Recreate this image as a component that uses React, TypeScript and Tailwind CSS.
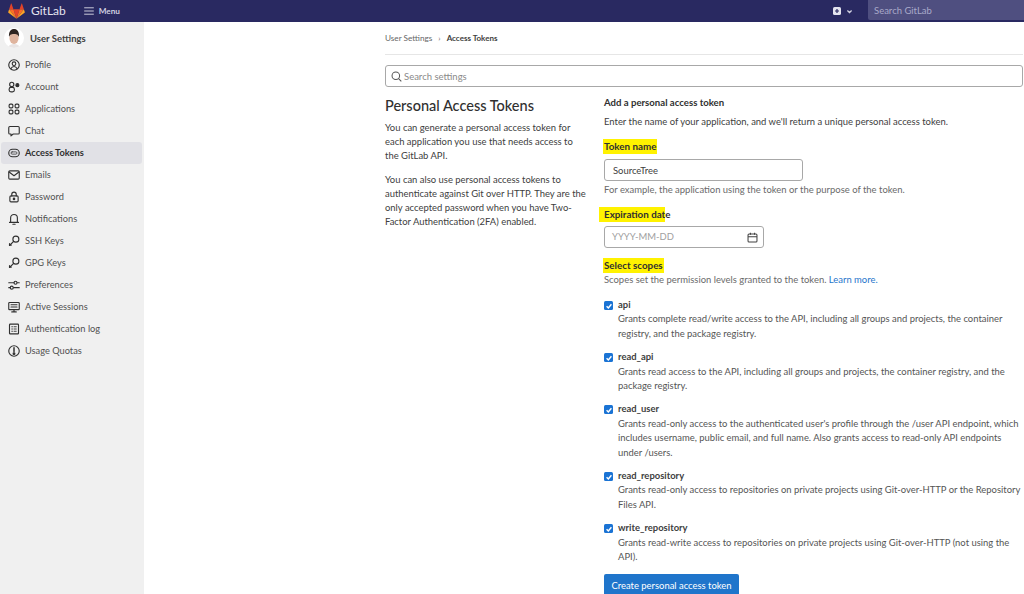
import type { ReactNode } from "react";

const FONT = "font-['Lato','Noto_Sans',sans-serif]";

function Ico({ children }: { children: ReactNode }) {
  return (
    <svg viewBox="0 0 16 16" className="w-[12px] h-[12px] shrink-0" fill="none" stroke="#303030" strokeWidth="1.5" strokeLinecap="round" strokeLinejoin="round">
      {children}
    </svg>
  );
}

const key = (
  <>
    <circle cx="10.5" cy="5.5" r="4" />
    <path d="M7.5 8.5L2 14v-2.500M4 12v2" />
  </>
);

const NAV: { label: string; icon: ReactNode; active?: boolean }[] = [
  { label: "Profile", icon: <><circle cx="8" cy="8" r="7" /><circle cx="8" cy="6.2" r="2.4" /><path d="M3.8 13c1-2.2 2.4-3 4.2-3s3.2.8 4.2 3" /></> },
  { label: "Account", icon: <><circle cx="5" cy="4.5" r="2.8" /><rect x="1.5" y="8.5" width="7" height="6" rx="2.5" /><circle cx="12.5" cy="5.5" r="2" fill="#303030" /></> },
  { label: "Applications", icon: <><rect x="1.5" y="1.5" width="5" height="5" rx="1.5" /><rect x="9.5" y="1.5" width="5" height="5" rx="1.5" /><rect x="1.5" y="9.5" width="5" height="5" rx="1.5" /><rect x="9.5" y="9.5" width="5" height="5" rx="1.5" /></> },
  { label: "Chat", icon: <path d="M2.5 2h11A1.500 1.500 0 0 1 15 3.500v7a1.500 1.500 0 0 1-1.500 1.500H7l-3 2.500V12H2.500A1.500 1.500 0 0 1 1 10.500v-7A1.500 1.500 0 0 1 2.500 2z" /> },
  { label: "Access Tokens", active: true, icon: <><rect x="1" y="3" width="14" height="10" rx="5" /><rect x="4" y="6.5" width="8" height="3" rx="1.5" strokeWidth="1" /></> },
  { label: "Emails", icon: <><rect x="1" y="2.5" width="14" height="11" rx="1.5" /><path d="M1.500 4l6.500 5 6.500-5" /></> },
  { label: "Password", icon: <><rect x="2.5" y="6.5" width="11" height="8" rx="1.5" /><path d="M5 6.500V4.500a3 3 0 0 1 6 0v2" /><circle cx="8" cy="10.5" r="1" fill="#303030" /></> },
  { label: "Notifications", icon: <><path d="M3.500 12.500V6.500a4.500 4.500 0 0 1 9 0v6" /><path d="M2 12.500h12M6.500 15h3" /></> },
  { label: "SSH Keys", icon: key },
  { label: "GPG Keys", icon: key },
  { label: "Preferences", icon: <><path d="M1 5h7M12.500 5H15M1 11.500h2M7.500 11.500H15" /><circle cx="10" cy="5" r="2" /><circle cx="5" cy="11.5" r="2" /></> },
  { label: "Active Sessions", icon: <><rect x="1" y="2" width="14" height="9.5" rx="1" /><path d="M4 5h8M4 8h8M8 11.500V14M5 14.500h6" /></> },
  { label: "Authentication log", icon: <><rect x="2" y="1.5" width="12" height="13" rx="1" /><path d="M5 5h1M8 5h3M5 8h1M8 8h3M5 11h1M8 11h3" strokeWidth="1.2" /></> },
  { label: "Usage Quotas", icon: <><circle cx="8" cy="8" r="7" /><path d="M8 3.500v5" strokeWidth="2" /><circle cx="8" cy="11.5" r="1.2" fill="#303030" /></> },
];

const SCOPES: { name: string; lines: string[] }[] = [
  { name: "api", lines: ["Grants complete read/write access to the API, including all groups and projects, the container", "registry, and the package registry."] },
  { name: "read_api", lines: ["Grants read access to the API, including all groups and projects, the container registry, and the", "package registry."] },
  { name: "read_user", lines: ["Grants read-only access to the authenticated user's profile through the /user API endpoint, which", "includes username, public email, and full name. Also grants access to read-only API endpoints", "under /users."] },
  { name: "read_repository", lines: ["Grants read-only access to repositories on private projects using Git-over-HTTP or the Repository", "Files API."] },
  { name: "write_repository", lines: ["Grants read-write access to repositories on private projects using Git-over-HTTP (not using the", "API)."] },
];

function Tanuki() {
  return (
    <svg viewBox="0 0 24 23" className="w-[17px] h-[16px]">
      <path d="M12 22.500L16.400 9H7.600z" fill="#e24329" />
      <path d="M12 22.500L7.600 9H1.400z" fill="#fc6d26" />
      <path d="M1.400 9L.1 13.100c-.1.4 0 .8.3 1L12 22.500z" fill="#fca326" />
      <path d="M1.400 9h6.200L4.900.9c-.1-.4-.7-.4-.9 0z" fill="#e24329" />
      <path d="M12 22.500L16.400 9h6.200z" fill="#fc6d26" />
      <path d="M22.600 9l1.300 4.100c.1.4 0 .8-.3 1L12 22.500z" fill="#fca326" />
      <path d="M22.600 9h-6.200l2.700-8.100c.1-.4.7-.4.9 0z" fill="#e24329" />
    </svg>
  );
}

function Avatar() {
  return (
    <svg viewBox="0 0 20 20" className="w-[20px] h-[20px] rounded-full bg-white shrink-0">
      <path d="M4 20c.5-3 3-4 6-4s5.500 1 6 4z" fill="#e8e4e4" />
      <ellipse cx="10" cy="10" rx="4.6" ry="6" fill="#dfb49e" />
      <path d="M5 9C4.500 3.500 7 1 10 1s5.500 2.500 5 8c-.8-2-1.500-3-5-3S5.800 7 5 9z" fill="#2e2420" />
    </svg>
  );
}

function Marked({ children, className }: { children: ReactNode; className: string }) {
  return <span className={`inline-block h-[15px] leading-[15px] bg-[#fff200] text-[9.8px] font-bold text-[#303030] ${className}`}>{children}</span>;
}

export default function App() {
  return (
    <div className={`${FONT} w-[1024px] h-[594px] overflow-hidden bg-white flex flex-col text-[9.45px] leading-[14px] text-[#303030]`}>
      <header className="h-[22px] shrink-0 bg-[#292961] flex items-center pl-[8px]">
        <Tanuki />
        <span className="ml-[6px] text-[12px] text-[#e4e4ef]">GitLab</span>
        <svg viewBox="0 0 12 10" className="ml-[18px] w-[10px] h-[8px]" stroke="#d1d1e0" strokeWidth="1.2">
          <path d="M0 1h12M0 5h12M0 9h12" />
        </svg>
        <span className="ml-[5px] text-[8.2px] font-bold text-[#d1d1e0]">Menu</span>
        <div className="ml-auto flex items-center h-full">
          <svg viewBox="0 0 10 10" className="w-[8px] h-[8px]">
            <rect width="10" height="10" rx="2" fill="#e4e4ef" />
            <path d="M5 2.500v5M2.500 5h5" stroke="#292961" strokeWidth="1.5" />
          </svg>
          <svg viewBox="0 0 10 10" className="ml-[5px] w-[7px] h-[7px]" fill="none" stroke="#d1d1e0" strokeWidth="1.8">
            <path d="M2 3.500l3 3 3-3" />
          </svg>
          <div className="ml-[15px] w-[156px] h-[20px] mb-[1px] self-start rounded-bl-[2px] bg-[#4f4f80] pl-[6px] text-[9.5px] leading-[21px] text-[#a9a9c9]">
            Search GitLab
          </div>
        </div>
      </header>

      <div className="flex flex-1 min-h-0">
        <aside className="w-[144px] shrink-0 bg-[#f0f0f0]">
          <div className="h-[32px] flex items-center pl-[4px] gap-[6px]">
            <Avatar />
            <span className="font-bold text-[9.5px] text-[#404040] mt-[1px]">User Settings</span>
          </div>
          <nav className="flex flex-col">
            {NAV.map((item) => (
              <div
                key={item.label}
                className={`h-[22px] ml-[1px] w-[141px] rounded-[3px] flex items-center pl-[7px] gap-[5px] text-[9.25px] ${
                  item.active ? "bg-[#e1e1e6] font-bold text-[#303030]" : "text-[#505050]"
                }`}
              >
                <Ico>{item.icon}</Ico>
                <span>{item.label}</span>
              </div>
            ))}
          </nav>
        </aside>

        <main className="flex-1 pl-[241px] pr-[1px] min-w-0">
          <div className="h-[33px] border-b border-[#e6e6e6] flex items-center text-[8.2px]">
            <span className="text-[#666666]">User Settings</span>
            <span className="mx-[6px] text-[#666666]">›</span>
            <span className="font-bold text-[8px] text-[#404040]">Access Tokens</span>
          </div>
          <div className="mt-[10px] h-[22px] border border-[#a8a8a8] rounded-[3px] flex items-center pl-[5px] gap-[2px] text-[9.5px] text-[#8a8a8a]">
            <svg viewBox="0 0 16 16" className="w-[11px] h-[11px]" fill="none" stroke="#555555" strokeWidth="1.5">
              <circle cx="7" cy="7" r="5.5" />
              <path d="M11 11l4 4" />
            </svg>
            <span className="mt-[1px]">Search settings</span>
          </div>

          <div className="flex mt-[7px]">
            <section className="w-[219px] shrink-0 pt-[2px] whitespace-nowrap">
              <h1 className="text-[14.5px] leading-[20px] font-medium text-[#303030]">Personal Access Tokens</h1>
              <p className="mt-[5px] text-[#404040]">
                You can generate a personal access token for<br />each application you use that needs access to<br />the GitLab API.
              </p>
              <p className="mt-[10px] text-[#404040]">
                You can also use personal access tokens to<br />authenticate against Git over HTTP. They are the<br />only accepted password when you have Two-<br />Factor Authentication (2FA) enabled.
              </p>
            </section>

            <section className="flex-1 min-w-0 pt-[2px] whitespace-nowrap">
              <div className="font-bold text-[9.6px] text-[#303030]">Add a personal access token</div>
              <p className="mt-[5px] text-[#404040]">Enter the name of your application, and we'll return a unique personal access token.</p>

              <div className="mt-[9px] h-[16px] flex items-center">
                <Marked className="px-[1px] -ml-[1px]">Token name</Marked>
              </div>
              <div className="mt-[5px] w-[199px] h-[22px] border border-[#a8a8a8] rounded-[3px] pl-[8px] leading-[21px] text-[#404040]">SourceTree</div>
              <p className="mt-[2px] text-[#6a6a6a]">For example, the application using the token or the purpose of the token.</p>

              <div className="mt-[10px] h-[15px] flex items-center">
                <Marked className="pl-[5px] -ml-[5px]">Expiration dat</Marked>
                <span className="inline-block h-[15px] leading-[15px] font-bold text-[9.8px]">e</span>
              </div>
              <div className="mt-[4px] w-[160px] h-[22px] border border-[#a8a8a8] rounded-[3px] pl-[7px] pr-[5px] flex items-center justify-between text-[#a0a0a0]">
                <span>YYYY-MM-DD</span>
                <svg viewBox="0 0 16 16" className="w-[11px] h-[11px]" fill="none" stroke="#404040" strokeWidth="1.5">
                  <rect x="1.5" y="3" width="13" height="11.5" rx="1.5" />
                  <path d="M1.500 7h13M5 1v3M11 1v3" />
                </svg>
              </div>

              <div className="mt-[10px] h-[15px] flex items-center">
                <Marked className="px-[1px] -ml-[1px]">Select scopes</Marked>
              </div>
              <p className="text-[#6a6a6a]">
                Scopes set the permission levels granted to the token. <span className="text-[#1f75cb]">Learn more.</span>
              </p>

              <div className="mt-[11px] flex flex-col gap-[9px] leading-[14.4px]">
                {SCOPES.map((s) => (
                  <div key={s.name} className="flex gap-[4px]">
                    <div className="mt-[3px] w-[9px] h-[9px] rounded-[1.5px] bg-[#1a73d4] flex items-center justify-center shrink-0">
                      <svg viewBox="0 0 10 10" className="w-[8px] h-[8px]" fill="none" stroke="#ffffff" strokeWidth="1.8">
                        <path d="M2 5.200l2.200 2.200L8 2.800" />
                      </svg>
                    </div>
                    <div className="ml-[1px] text-[#555555]">
                      <div className="font-bold text-[#404040]">{s.name}</div>
                      {s.lines.map((l) => (
                        <div key={l}>{l}</div>
                      ))}
                    </div>
                  </div>
                ))}
              </div>

              <button className="mt-[9px] w-[135px] h-[24px] rounded-[2px] bg-[#1f75cb] text-white text-center">Create personal access token</button>
            </section>
          </div>
        </main>
      </div>
    </div>
  );
}
